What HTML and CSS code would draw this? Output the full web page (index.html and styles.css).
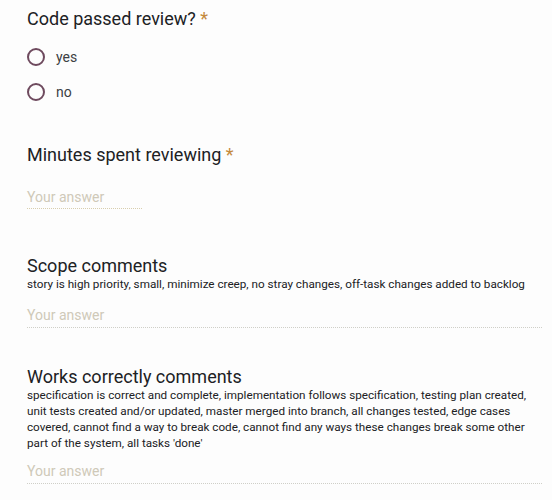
FILE: index.html
```html
<!DOCTYPE html>
<html>
<head>
<meta charset="utf-8">
<link rel="stylesheet" href="styles.css">
</head>
<body>
<div class="form">
  <section class="q q-radio">
    <div class="title">Code passed review? <span class="req">*</span></div>
    <div class="options">
      <label class="opt"><span class="radio"></span><span class="opt-label">yes</span></label>
      <label class="opt"><span class="radio"></span><span class="opt-label">no</span></label>
    </div>
  </section>
  <section class="q q-short">
    <div class="title">Minutes spent reviewing <span class="req">*</span></div>
    <div class="answer short">Your answer</div>
  </section>
  <section class="q q-scope">
    <div class="title compact">Scope comments</div>
    <div class="desc">story is high priority, small, minimize creep, no stray changes, off-task changes added to backlog</div>
    <div class="answer long">Your answer</div>
  </section>
  <section class="q q-works">
    <div class="title compact">Works correctly comments</div>
    <div class="desc">specification is correct and complete, implementation follows specification, testing plan created, unit tests created and/or updated, master merged into branch, all changes tested, edge cases covered, cannot find a way to break code, cannot find any ways these changes break some other part of the system, all tasks 'done'</div>
    <div class="answer long tight">Your answer</div>
  </section>
</div>
</body>
</html>
```
FILE: styles.css
```css
html, body {
  margin: 0;
  padding: 0;
  background: #fdfdfd;
}
.form {
  font-family: Roboto, "Liberation Sans", sans-serif;
  color: #202124;
  padding: 0 10px 0 27px;
  display: flex;
  flex-direction: column;
}
.title {
  font-size: 18px;
  line-height: 24px;
  color: #202124;
}
.title.compact {
  line-height: 20px;
}
.req {
  color: #c4893c;
}
.q-radio {
  padding-top: 7px;
}
.options {
  display: flex;
  flex-direction: column;
  gap: 15px;
  margin-top: 16px;
}
.opt {
  display: flex;
  align-items: center;
  gap: 11px;
  height: 20px;
  font-size: 14px;
  color: #3c4043;
}
.radio {
  width: 14px;
  height: 14px;
  border: 2px solid #6e4a5e;
  border-radius: 50%;
  flex: none;
}
.q-short {
  margin-top: 41px;
}
.answer {
  font-size: 14px;
  line-height: 20px;
  color: #cfc9b8;
  padding-bottom: 2px;
  border-bottom: 1px dotted #d8ceae;
}
.answer.short {
  width: 115px;
  margin-top: 20px;
  padding-bottom: 1px;
}
.answer.long {
  margin-top: 13px;
  border-bottom-color: #cfcfc8;
}
.answer.long.tight {
  margin-top: 10px;
}
.q-scope {
  margin-top: 47px;
}
.desc {
  font-size: 11.7px;
  line-height: 16px;
  color: #202124;
}
.q-works {
  margin-top: 39px;
}
```
